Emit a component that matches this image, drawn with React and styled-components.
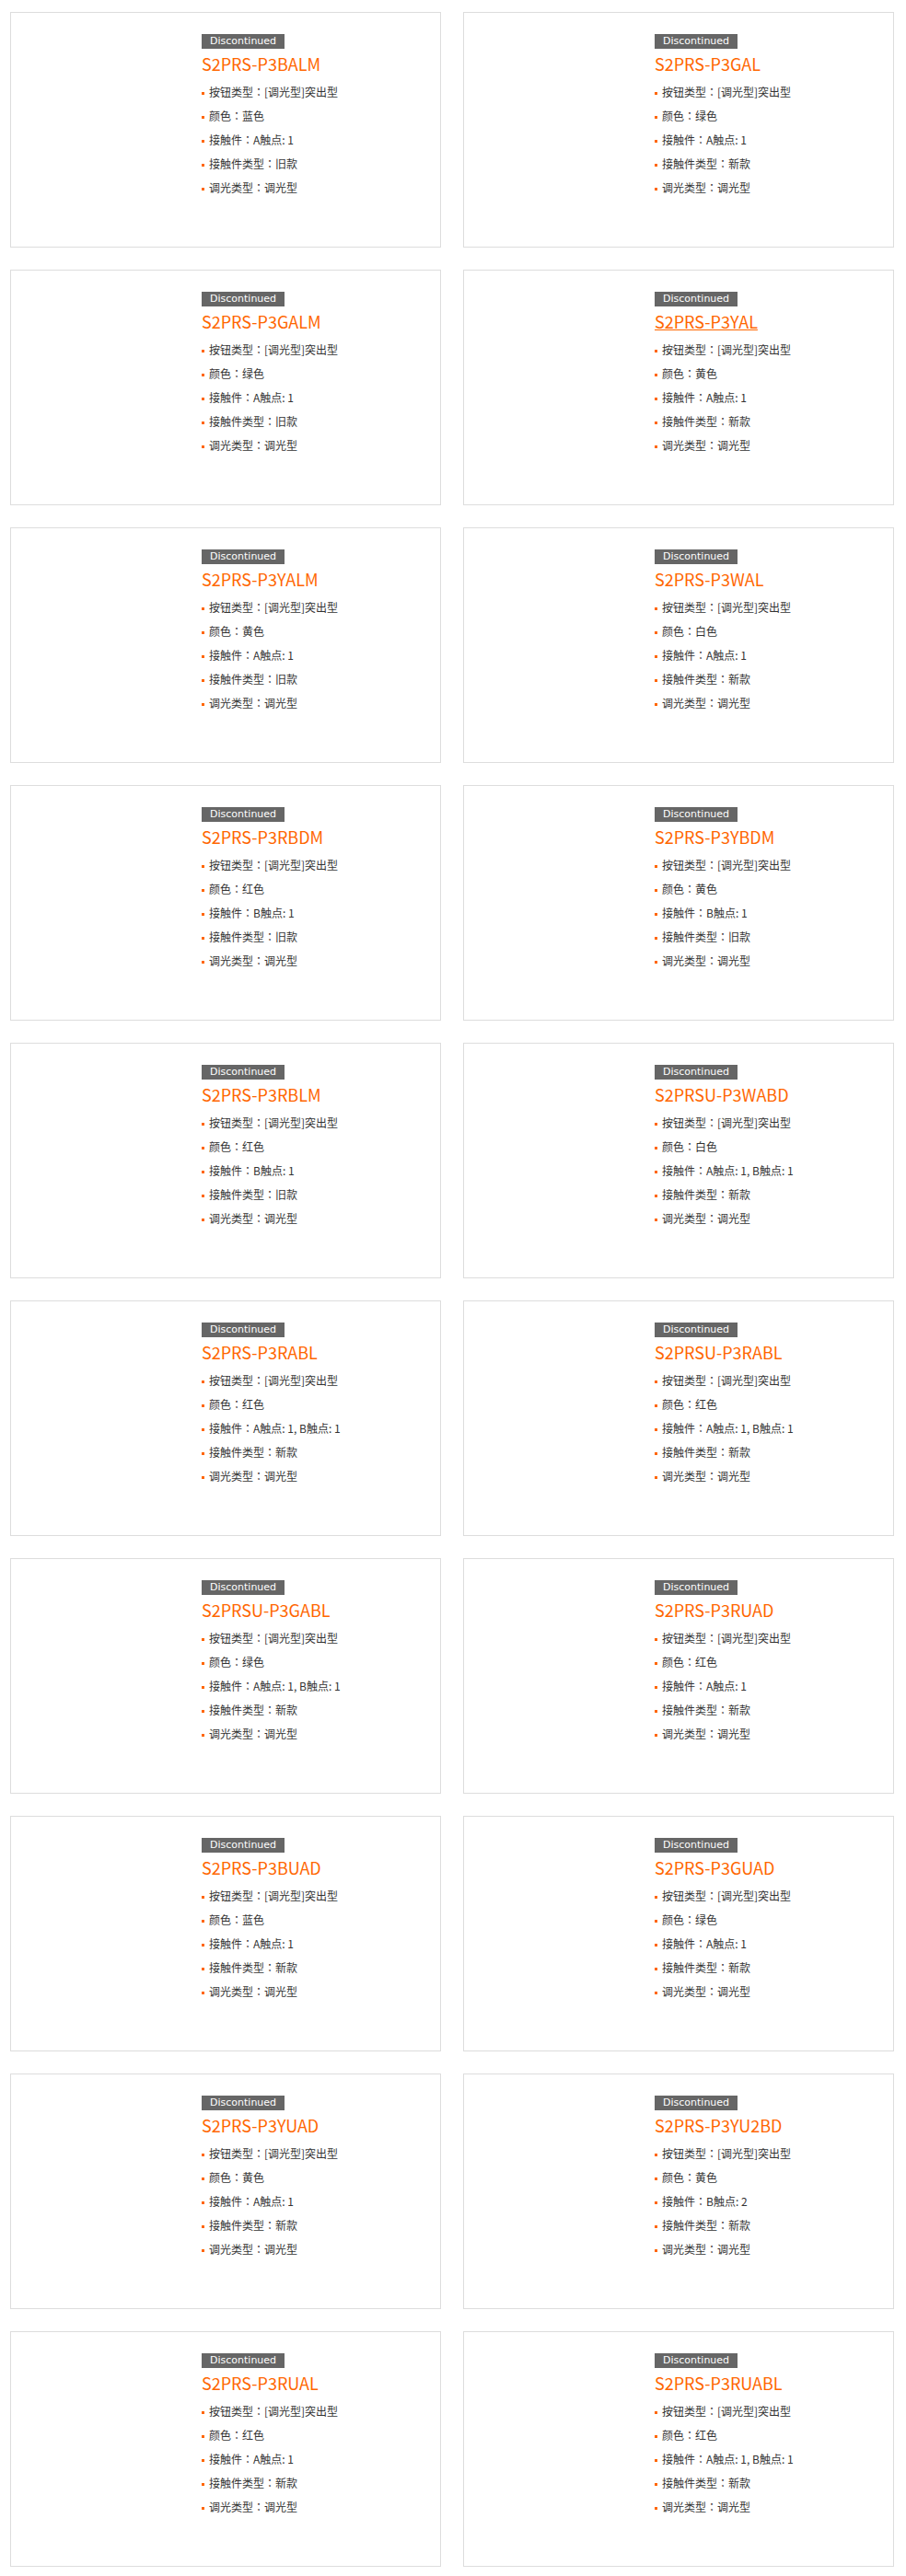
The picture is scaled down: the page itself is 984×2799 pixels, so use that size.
import styled, { createGlobalStyle } from "styled-components";

const GlobalStyle = createGlobalStyle`
  body {
    margin: 0;
    background: #fff;
    font-family: "Noto Sans CJK SC", "Liberation Sans", sans-serif;
    color: #333;
  }
`;

const Lista = styled.div`
  display: grid;
  grid-template-columns: 468px 468px;
  gap: 24px;
  padding: 13px 13px 11px 11px;
`;

const Card = styled.div`
  box-sizing: border-box;
  height: 256px;
  border: 1px solid #ddd;
  display: flex;
`;

const Thumb = styled.div`
  flex: 0 0 207px;
`;

const Info = styled.div`
  flex: 1;
  padding-top: 23px;
`;

const Badge = styled.span`
  display: block;
  width: fit-content;
  height: 16px;
  line-height: 16px;
  padding: 0 9px;
  background-color: #666;
  color: #fff;
  font-family: "DejaVu Sans", sans-serif;
  font-size: 11px;
`;

const Titulo = styled.a`
  display: block;
  width: fit-content;
  margin-top: 4px;
  font-size: 18px;
  line-height: 24px;
  color: #ff6600;
  text-decoration: ${(p) => (p.$hover ? "underline" : "none")};
`;

const Specs = styled.ul`
  list-style: none;
  margin: 6px 0 0;
  padding: 0;
`;

const Spec = styled.li`
  font-family: "Noto Sans CJK TC", "Noto Sans CJK SC", sans-serif;
  font-size: 12px;
  line-height: 26px;
  color: #333;

  &::before {
    content: "";
    display: inline-block;
    width: 3px;
    height: 3px;
    margin-right: 5px;
    vertical-align: middle;
    background-color: #ff6600;
  }
`;

const produtos = [
  ["S2PRS-P3BALM", "蓝色", "A触点: 1", "旧款"],
  ["S2PRS-P3GAL", "绿色", "A触点: 1", "新款"],
  ["S2PRS-P3GALM", "绿色", "A触点: 1", "旧款"],
  ["S2PRS-P3YAL", "黄色", "A触点: 1", "新款", true],
  ["S2PRS-P3YALM", "黄色", "A触点: 1", "旧款"],
  ["S2PRS-P3WAL", "白色", "A触点: 1", "新款"],
  ["S2PRS-P3RBDM", "红色", "B触点: 1", "旧款"],
  ["S2PRS-P3YBDM", "黄色", "B触点: 1", "旧款"],
  ["S2PRS-P3RBLM", "红色", "B触点: 1", "旧款"],
  ["S2PRSU-P3WABD", "白色", "A触点: 1, B触点: 1", "新款"],
  ["S2PRS-P3RABL", "红色", "A触点: 1, B触点: 1", "新款"],
  ["S2PRSU-P3RABL", "红色", "A触点: 1, B触点: 1", "新款"],
  ["S2PRSU-P3GABL", "绿色", "A触点: 1, B触点: 1", "新款"],
  ["S2PRS-P3RUAD", "红色", "A触点: 1", "新款"],
  ["S2PRS-P3BUAD", "蓝色", "A触点: 1", "新款"],
  ["S2PRS-P3GUAD", "绿色", "A触点: 1", "新款"],
  ["S2PRS-P3YUAD", "黄色", "A触点: 1", "新款"],
  ["S2PRS-P3YU2BD", "黄色", "B触点: 2", "新款"],
  ["S2PRS-P3RUAL", "红色", "A触点: 1", "新款"],
  ["S2PRS-P3RUABL", "红色", "A触点: 1, B触点: 1", "新款"],
];

function App() {
  return (
    <>
      <GlobalStyle />
      <Lista>
        {produtos.map(([nome, cor, contato, tipo, hover]) => (
          <Card key={nome}>
            <Thumb />
            <Info>
              <Badge>Discontinued</Badge>
              <Titulo href="#" $hover={hover}>{nome}</Titulo>
              <Specs>
                <Spec>按钮类型：[调光型]突出型</Spec>
                <Spec>颜色：{cor}</Spec>
                <Spec>接触件：{contato}</Spec>
                <Spec>接触件类型：{tipo}</Spec>
                <Spec>调光类型：调光型</Spec>
              </Specs>
            </Info>
          </Card>
        ))}
      </Lista>
    </>
  );
}
export default App;
